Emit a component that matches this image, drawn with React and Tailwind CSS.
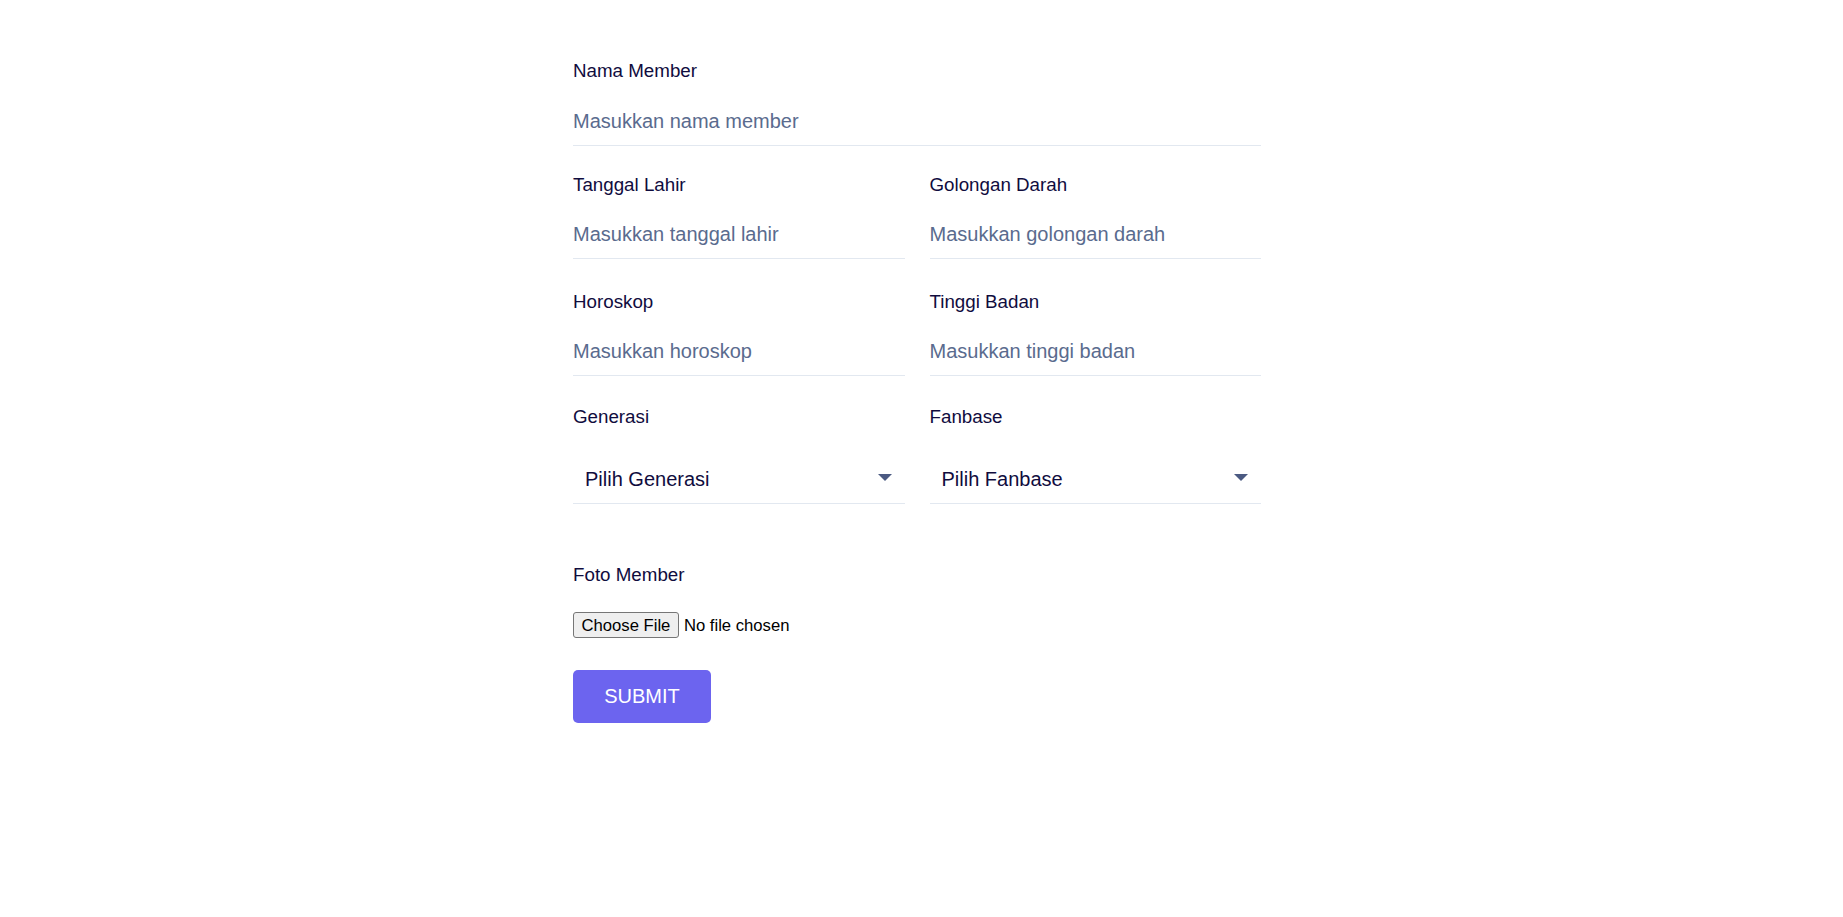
import React from "react";

const labelCls = "block text-[18.75px] leading-[22px] font-medium text-[#100c3e]";
const inputCls =
  "block w-full h-[46px] pb-[3px] border-b border-[#e2e8f0] bg-transparent text-[20px] text-[#100c3e] outline-none placeholder:text-[#5a6b8e]";

const TextField = ({ label, placeholder, gap = "mt-[17px]" }) => (
  <div>
    <label className={labelCls}>{label}</label>
    <input type="text" placeholder={placeholder} className={`${inputCls} ${gap}`} />
  </div>
);

const SelectField = ({ label, placeholder }) => (
  <div>
    <label className={labelCls}>{label}</label>
    <div className="relative mt-[28.5px]">
      <select
        defaultValue=""
        className="block w-full h-[47px] pb-[1px] appearance-none border-b border-[#e2e8f0] bg-transparent pl-[12px] text-[20px] text-[#100c3e] outline-none"
      >
        <option value="" disabled>
          {placeholder}
        </option>
      </select>
      <svg
        className="pointer-events-none absolute right-[13px] top-[17px] w-[14px] h-[7px]"
        viewBox="0 0 14 7"
      >
        <polygon points="0,0 14,0 7,7" fill="#4b5a82" />
      </svg>
    </div>
  </div>
);

export default function App() {
  return (
    <div className="min-h-screen bg-white font-['Liberation_Sans',Arial,sans-serif]">
      <div className="flex justify-center pt-[60px]">
        <form className="w-[688px] mr-[9px]" onSubmit={(e) => e.preventDefault()}>
          <TextField label="Nama Member" placeholder="Masukkan nama member" gap="mt-[18px]" />

          <div className="grid grid-cols-2 gap-x-[25px] mt-[28px]">
            <TextField label="Tanggal Lahir" placeholder="Masukkan tanggal lahir" />
            <TextField label="Golongan Darah" placeholder="Masukkan golongan darah" />
          </div>

          <div className="grid grid-cols-2 gap-x-[25px] mt-[32px]">
            <TextField label="Horoskop" placeholder="Masukkan horoskop" />
            <TextField label="Tinggi Badan" placeholder="Masukkan tinggi badan" />
          </div>

          <div className="grid grid-cols-2 gap-x-[25px] mt-[30px]">
            <SelectField label="Generasi" placeholder="Pilih Generasi" />
            <SelectField label="Fanbase" placeholder="Pilih Fanbase" />
          </div>

          <div className="mt-[60px]">
            <label className={labelCls}>Foto Member</label>
            <input
              type="file"
              className="block mt-[26px] text-[16.67px] text-black file:mr-[5px] file:h-[26px] file:px-[7.5px] file:border file:border-[#767676] file:rounded-[3px] file:bg-[#efefef] file:text-black"
            />
          </div>

          <button
            type="submit"
            className="mt-[32px] h-[53px] w-[138px] rounded-[5px] bg-[#6c64ef] text-[20px] text-white"
          >
            SUBMIT
          </button>
        </form>
      </div>
    </div>
  );
}
